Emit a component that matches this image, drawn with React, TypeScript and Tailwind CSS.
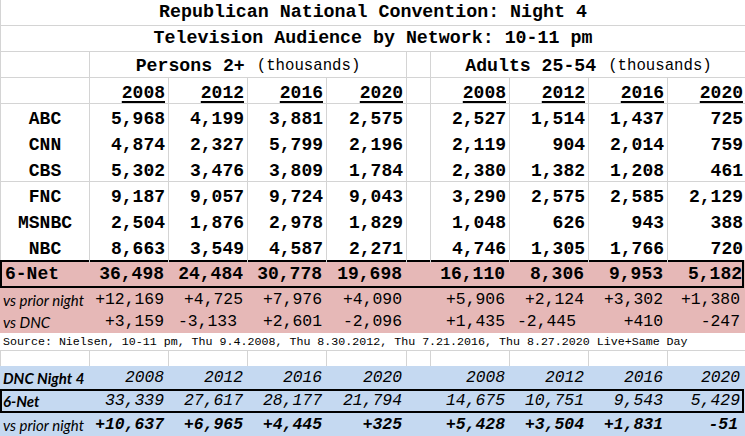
import React from "react";

const G = "grid grid-cols-[88px_79px_79px_79px_80px_24px_79px_79px_79px_79px]";
const GB = "grid grid-cols-[88px_79px_79px_79px_80px_24px_79px_79px_79px_78px] w-[744px]";
const LINE = "border-[#d4d4d4]";
const MONO = "font-['Liberation_Mono','Courier_New',monospace]";
const SANS = "font-['Lato','Noto_Sans',sans-serif]";

type Row = { label: string; vals: string[] };

const data: Row[] = [
  { label: "ABC", vals: ["5,968", "4,199", "3,881", "2,575", "2,527", "1,514", "1,437", "725"] },
  { label: "CNN", vals: ["4,874", "2,327", "5,799", "2,196", "2,119", "904", "2,014", "759"] },
  { label: "CBS", vals: ["5,302", "3,476", "3,809", "1,784", "2,380", "1,382", "1,208", "461"] },
  { label: "FNC", vals: ["9,187", "9,057", "9,724", "9,043", "3,290", "2,575", "2,585", "2,129"] },
  { label: "MSNBC", vals: ["2,504", "1,876", "2,978", "1,829", "1,048", "626", "943", "388"] },
  { label: "NBC", vals: ["8,663", "3,549", "4,587", "2,271", "4,746", "1,305", "1,766", "720"] },
];

const years = ["2008", "2012", "2016", "2020"];

function GridCells({
  vals,
  lines,
  cellClass,
  extraPad = {},
}: {
  vals: string[];
  lines: boolean;
  cellClass: string;
  extraPad?: Record<number, string>;
}) {
  const cells: React.ReactNode[] = [];
  vals.forEach((v, i) => {
    if (i === 4) {
      cells.push(<div key="sp" className={lines ? `border-l ${LINE}` : ""} />);
    }
    cells.push(
      <div
        key={i}
        className={`flex items-center justify-end ${extraPad[i] ?? "pr-[3px]"} ${cellClass} ${lines ? `border-l ${LINE}` : ""}`}
      >
        {v}
      </div>
    );
  });
  return <>{cells}</>;
}

export default function App() {
  return (
    <div className={`w-[745px] h-[436px] bg-white text-black overflow-hidden ${MONO}`}>
      {/* Title */}
      <div className={`h-[26px] border-b border-t-0 border-l ${LINE} flex items-center justify-center font-bold text-[18.3px] pt-[1px]`}>
        Republican National Convention: Night 4
      </div>
      <div className={`h-[26px] border-b border-l ${LINE} flex items-center justify-center font-bold text-[18.3px] pt-[1px]`}>
        Television Audience by Network: 10-11 pm
      </div>
      {/* Group header */}
      <div className={`${G} h-[26px] border-b border-l ${LINE}`}>
        <div />
        <div className={`col-span-4 border-l ${LINE} flex items-center justify-center pt-[1px]`}>
          <span className="font-bold text-[18.2px]">Persons 2+</span>
          <span className="text-[15.7px] ml-[12px]">(thousands)</span>
        </div>
        <div className={`border-l ${LINE}`} />
        <div className={`col-span-4 border-l ${LINE} flex items-center justify-center pt-[1px]`}>
          <span className="font-bold text-[18.2px]">Adults 25-54</span>
          <span className="text-[15.7px] ml-[12px]">(thousands)</span>
        </div>
      </div>
      {/* Years */}
      <div className={`${G} h-[26px] border-b border-l ${LINE}`}>
        <div />
        <GridCells
          vals={[...years, ...years]}
          lines
          cellClass="font-bold text-[18px] underline decoration-2 underline-offset-[3px] pt-[2px]"
        />
      </div>
      {/* Data rows */}
      {data.map((r, idx) => (
        <div
          key={r.label}
          className={`${G} h-[26px] border-l ${LINE} ${idx === 2 ? `border-b` : ""}`}
        >
          <div className="flex items-center justify-center font-bold text-[18px] pt-[2px]">{r.label}</div>
          <GridCells vals={r.vals} lines cellClass="font-bold text-[18px] pt-[2px]" />
        </div>
      ))}
      {/* Pink block */}
      <div className="bg-[#e6b8b7] w-[745px]">
        <div className={`${GB} h-[28px] shadow-[inset_0_0_0_2px_#000]`}>
          <div className="flex items-center pl-[5px] font-bold text-[18px] pt-[1px]">6-Net</div>
          <GridCells
            vals={["36,498", "24,484", "30,778", "19,698", "16,110", "8,306", "9,953", "5,182"]}
            lines={false}
            cellClass="font-bold text-[18px] pt-[1px]"
            extraPad={{ 7: "pr-[2px]" }}
          />
        </div>
        <div className={`${G} h-[22px]`}>
          <div className={`flex items-center pl-[3px] italic text-[15px] ${SANS}`}>vs prior night</div>
          <GridCells
            vals={["+12,169", "+4,725", "+7,976", "+4,090", "+5,906", "+2,124", "+3,302", "+1,380"]}
            lines={false}
            cellClass="text-[16.4px]"
            extraPad={{ 7: "pr-[5px]" }}
          />
        </div>
        <div className={`${G} h-[23px]`}>
          <div className={`flex items-center pl-[3px] italic text-[15px] ${SANS}`}>vs DNC</div>
          <GridCells
            vals={["+3,159", "-3,133", "+2,601", "-2,096", "+1,435", "-2,445", "+410", "-247"]}
            lines={false}
            cellClass="text-[16.4px]"
            extraPad={{ 1: "pr-[9px]", 5: "pr-[11px]", 7: "pr-[5px]" }}
          />
        </div>
      </div>
      {/* Source */}
      <div className="h-[17px] flex items-center pl-[3px] text-[11.65px] whitespace-nowrap">
        Source: Nielsen, 10-11 pm, Thu 9.4.2008, Thu 8.30.2012, Thu 7.21.2016, Thu 8.27.2020 Live+Same Day
      </div>
      {/* Blank */}
      <div className={`${G} h-[16px] border-t border-l ${LINE}`}>
        <div />
        {Array.from({ length: 9 }).map((_, i) => (
          <div key={i} className={`border-l ${LINE}`} />
        ))}
      </div>
      {/* Blue block */}
      <div className="bg-[#c5d9f1] w-[745px]">
        <div className={`${G} h-[23px]`}>
          <div className={`flex items-center pl-[3px] italic font-bold text-[15px] ${SANS}`}>DNC Night 4</div>
          <GridCells vals={[...years, ...years]} lines={false} cellClass="italic text-[16.3px]" extraPad={{ 7: "pr-[5px]" }} />
        </div>
        <div className={`${GB} h-[24px] shadow-[inset_0_0_0_2px_#000]`}>
          <div className={`flex items-center pl-[3px] italic font-bold text-[15px] ${SANS}`}>6-Net</div>
          <GridCells
            vals={["33,339", "27,617", "28,177", "21,794", "14,675", "10,751", "9,543", "5,429"]}
            lines={false}
            cellClass="italic text-[16.4px]"
            extraPad={{ 7: "pr-[4px]" }}
          />
        </div>
        <div className={`${G} h-[23px]`}>
          <div className={`flex items-center pl-[3px] italic text-[15px] ${SANS}`}>vs prior night</div>
          <GridCells
            vals={["+10,637", "+6,965", "+4,445", "+325", "+5,428", "+3,504", "+1,831", "-51"]}
            lines={false}
            cellClass="italic font-bold text-[16.4px]"
            extraPad={{ 7: "pr-[7px]" }}
          />
        </div>
      </div>
    </div>
  );
}
